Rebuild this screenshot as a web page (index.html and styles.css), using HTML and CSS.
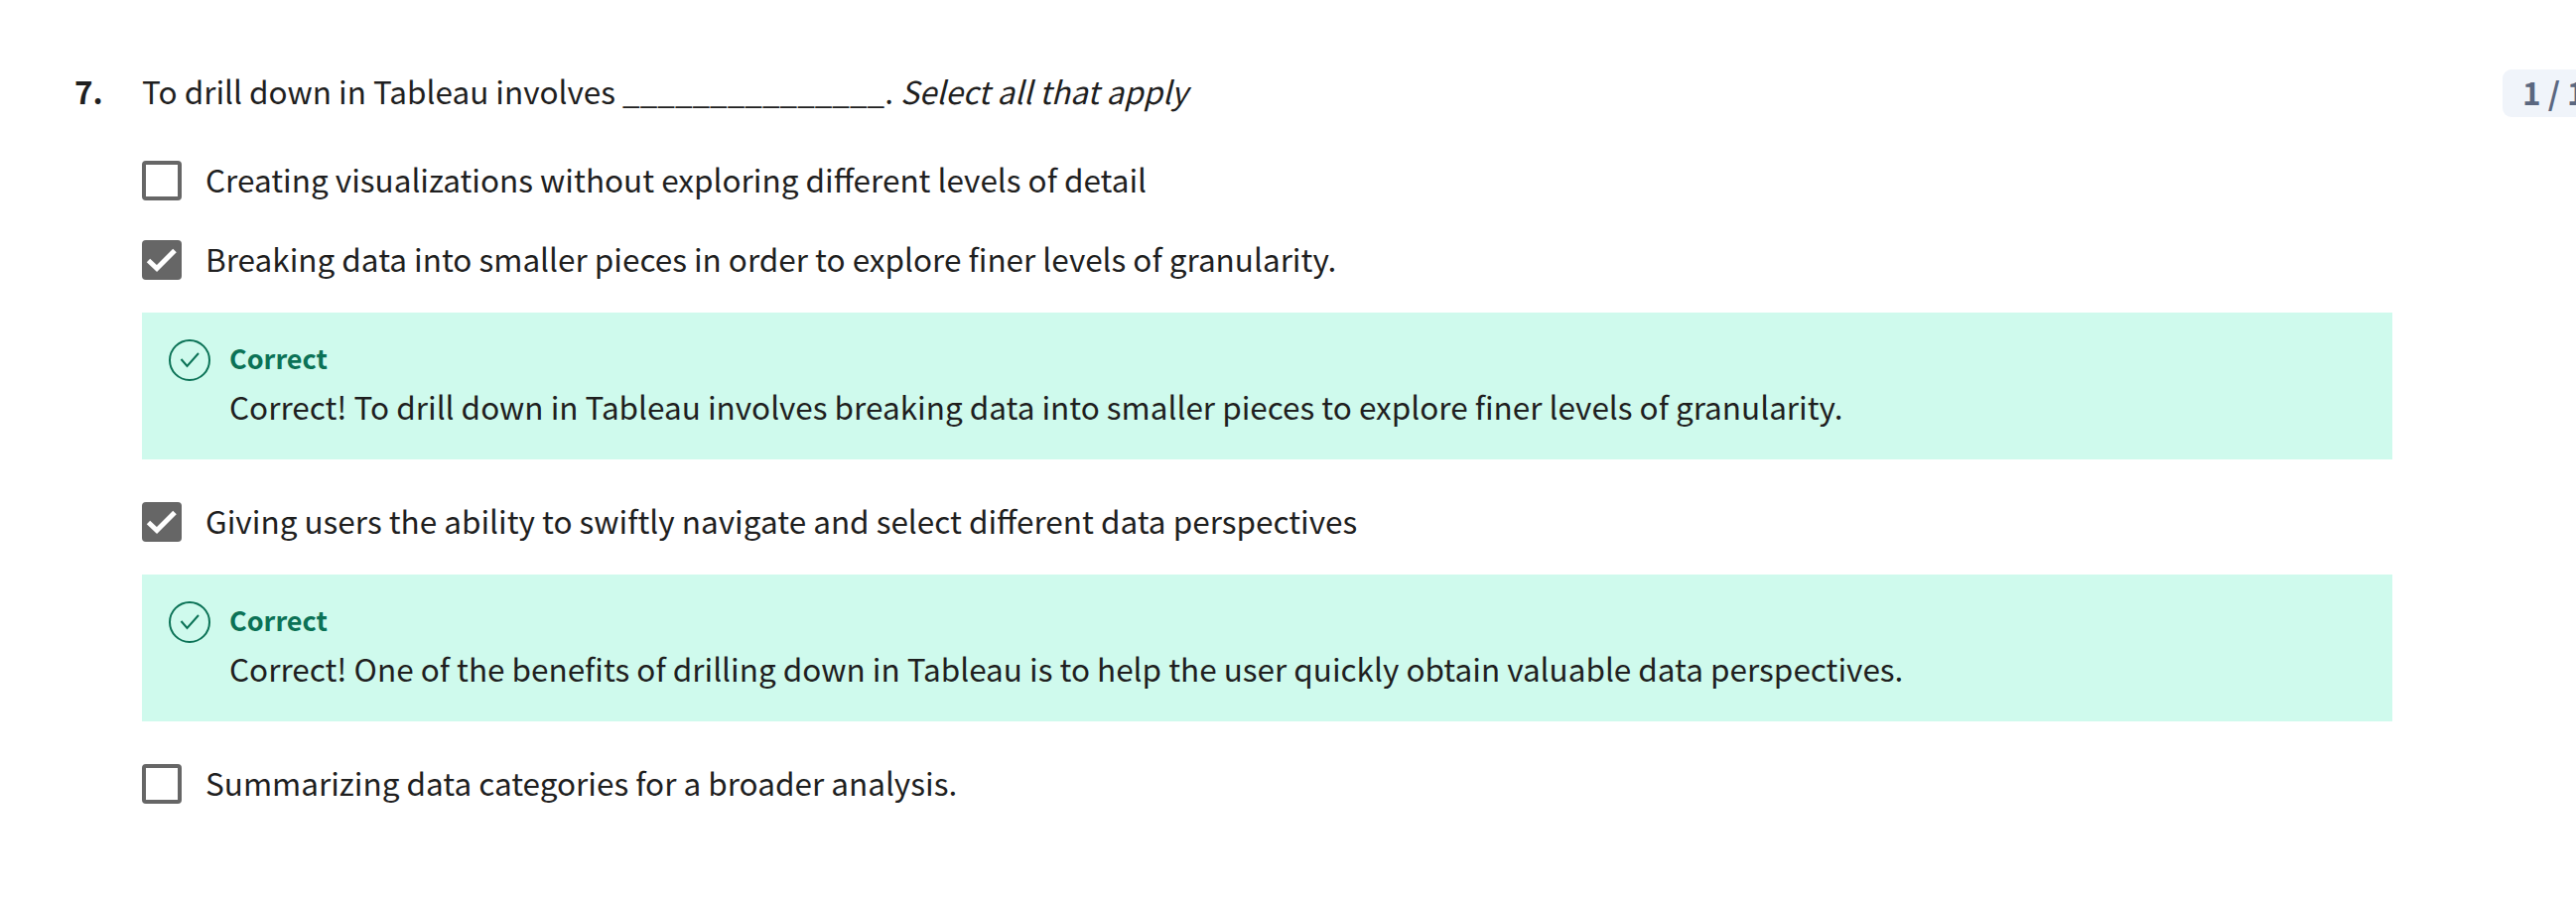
FILE: index.html
```html
<!DOCTYPE html>
<html lang="en">
<head>
  <meta charset="UTF-8">
  <title>Question 7</title>
  <link rel="stylesheet" href="styles.css">
</head>
<body>
  <div class="question">
    <div class="question-head">
      <span class="number">7.</span>
      <p class="prompt">To drill down in Tableau involves _______________. <em>Select all that apply</em></p>
      <span class="points">1 / 1 point</span>
    </div>

    <div class="options">
      <div class="option">
        <span class="box"></span>
        <span class="option-text">Creating visualizations without exploring different levels of detail</span>
      </div>

      <div class="option">
        <span class="box checked">
          <svg viewBox="0 0 40 40" width="40" height="40"><path d="M6.500 20.500l8.500 8L33 10.500" fill="none" stroke="#fff" stroke-width="5"/></svg>
        </span>
        <span class="option-text">Breaking data into smaller pieces in order to explore finer levels of granularity.</span>
      </div>
      <div class="feedback">
        <svg class="feedback-icon" viewBox="0 0 42 42" width="42" height="42">
          <circle cx="21" cy="21" r="20" fill="none" stroke="#0b7256" stroke-width="2"/>
          <path d="M12.500 20l6 7L30 14" fill="none" stroke="#0b7256" stroke-width="2"/>
        </svg>
        <div class="feedback-body">
          <div class="feedback-title">Correct</div>
          <div>Correct! To drill down in Tableau involves breaking data into smaller pieces to explore finer levels of granularity.</div>
        </div>
      </div>

      <div class="option">
        <span class="box checked">
          <svg viewBox="0 0 40 40" width="40" height="40"><path d="M6.500 20.500l8.500 8L33 10.500" fill="none" stroke="#fff" stroke-width="5"/></svg>
        </span>
        <span class="option-text">Giving users the ability to swiftly navigate and select different data perspectives</span>
      </div>
      <div class="feedback">
        <svg class="feedback-icon" viewBox="0 0 42 42" width="42" height="42">
          <circle cx="21" cy="21" r="20" fill="none" stroke="#0b7256" stroke-width="2"/>
          <path d="M12.500 20l6 7L30 14" fill="none" stroke="#0b7256" stroke-width="2"/>
        </svg>
        <div class="feedback-body">
          <div class="feedback-title">Correct</div>
          <div>Correct! One of the benefits of drilling down in Tableau is to help the user quickly obtain valuable data perspectives.</div>
        </div>
      </div>

      <div class="option">
        <span class="box"></span>
        <span class="option-text">Summarizing data categories for a broader analysis.</span>
      </div>
    </div>
  </div>
</body>
</html>
```

FILE: styles.css
```css
body {
  margin: 0;
  height: 906px;
  overflow: hidden;
  background: #fff;
  color: #1f1f1f;
  font-family: "Noto Sans CJK SC", "Noto Sans", sans-serif;
  font-size: 31.5px;
  line-height: 54px;
}
.question {
  padding: 64px 0 0 75px;
}
.question-head {
  display: flex;
  align-items: flex-start;
}
.number {
  width: 68px;
  font-weight: 700;
  flex-shrink: 0;
}
.prompt {
  margin: 0;
  width: 2378px;
  flex-shrink: 0;
}
.points {
  flex: 1;
  min-width: 0;
  overflow: hidden;
  box-sizing: border-box;
  height: 48px;
  background: #f0f4fa;
  color: #5b6780;
  border-radius: 9px 0 0 9px;
  padding-left: 20px;
  margin-top: 6px;
  font-weight: 600;
  line-height: 44px;
  white-space: nowrap;
}
.options {
  width: 2267px;
  margin: 37px 0 0 68px;
}
.option {
  display: flex;
  align-items: center;
  gap: 24px;
  height: 54px;
  margin-bottom: 26px;
}
.option-text {
  padding-bottom: 5px;
}
.box {
  width: 40px;
  height: 40px;
  box-sizing: border-box;
  border: 4.5px solid #666;
  border-radius: 4px;
  flex-shrink: 0;
}
.box.checked {
  border: 0;
  background: #666;
}
.box svg {
  display: block;
}
.feedback {
  display: flex;
  gap: 19px;
  background: #cffaed;
  height: 148px;
  padding: 27px 27px 0;
  box-sizing: border-box;
  margin-bottom: 36px;
}
.feedback-body {
  margin-top: -2px;
}
.feedback-title {
  color: #0b7256;
  font-size: 27px;
  font-weight: 700;
  line-height: 42px;
}
.feedback-icon {
  flex-shrink: 0;
}
```
